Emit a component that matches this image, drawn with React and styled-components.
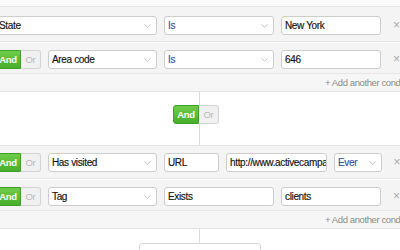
import React from 'react';
import styled, { createGlobalStyle } from 'styled-components';

const GlobalStyle = createGlobalStyle`
  html, body {
    margin: 0;
    padding: 0;
    background: #fff;
  }
  body {
    font-family: "Liberation Sans", Arial, Helvetica, sans-serif;
  }
`;

const Viewport = styled.div`
  width: 400px;
  height: 250px;
  overflow: hidden;
  background: #fff;
`;

const Canvas = styled.div`
  width: 410px;
  margin-left: -5px;
  display: flex;
  flex-direction: column;
`;

const Group = styled.div`
  background: #f4f4f4;
  border-top: ${props => props.$open ? 'none' : '1px solid #e2e2e2'};
  border-bottom: 1px solid #e2e2e2;
  display: flex;
  flex-direction: column;
`;

const TopStrip = styled.div`
  height: 6px;
  background: #fbfbfb;
  border-bottom: 1px solid #e6e6e6;
`;

const Row = styled.div`
  display: flex;
  align-items: center;
  gap: 7px;
  padding-top: ${props => props.$top || 7}px;
  padding-bottom: ${props => props.$last ? 4 : 6}px;
  border-bottom: ${props => props.$last ? 'none' : '1px solid #e4e4e4'};
  box-shadow: ${props => props.$last ? 'none' : '0 1px 0 #fff'};
  margin-bottom: ${props => props.$last ? 0 : 1}px;
`;

const Toggle = styled.div`
  display: flex;
  flex-shrink: 0;
  height: 19px;
  margin-right: ${props => props.$shift || 0}px;
`;

const AndBtn = styled.div`
  width: 26px;
  box-sizing: border-box;
  display: flex;
  align-items: center;
  justify-content: center;
  background: linear-gradient(#6fcc4a, #47ae2c);
  border: 1px solid #3f9e28;
  border-radius: 3px 0 0 3px;
  color: #fff;
  font-size: 9.5px;
  font-weight: bold;
  letter-spacing: -0.3px;
`;

const OrBtn = styled.div`
  width: 20px;
  box-sizing: border-box;
  display: flex;
  align-items: center;
  justify-content: center;
  background: #f0f0f0;
  border: 1px solid #d3d3d3;
  border-left: none;
  border-radius: 0 3px 3px 0;
  color: #b8b8b8;
  font-size: 9.5px;
  letter-spacing: -0.3px;
`;

const Field = styled.div`
  width: ${props => props.$w}px;
  flex-shrink: 0;
  height: 19px;
  box-sizing: border-box;
  display: flex;
  align-items: center;
  justify-content: space-between;
  padding: 0 5px 0 3px;
  background: #fff;
  border: 1px solid #cdcdcd;
  border-radius: 3px;
  font-size: 10px;
  letter-spacing: -0.35px;
  color: ${props => props.$blue ? '#33509f' : '#111'};
  -webkit-text-stroke: 0.15px ${props => props.$blue ? '#33509f' : '#111'};
  white-space: nowrap;
  overflow: hidden;
`;

const Chevron = () => (
  <svg width="7" height="4" viewBox="0 0 7 4">
    <path d="M0.5 0.5 L3.5 3.2 L6.5 0.5" fill="none" stroke="#c4c4c4" strokeWidth="1" />
  </svg>
);

const Close = styled.div`
  width: 18px;
  text-align: center;
  color: #aaa;
  font-size: 12px;
  line-height: 19px;
`;

const Footer = styled.div`
  height: 17px;
  display: flex;
  align-items: center;
  padding-left: 330px;
  background: #f6f6f6;
  border-top: 1px solid #e8e8e8;
  color: #8a8a8a;
  font-size: 9.5px;
  letter-spacing: -0.4px;
  white-space: nowrap;
`;

const Connector = styled.div`
  height: ${props => props.$h}px;
  display: flex;
  flex-direction: column;
  align-items: center;
  padding-top: ${props => props.$pad || 0}px;
  box-sizing: border-box;
  background: linear-gradient(to right, transparent calc(50% - 1px), #dcdcdc calc(50% - 1px), #dcdcdc 50%, transparent 50%);
`;

const AddGroup = styled.div`
  width: 122px;
  height: 30px;
  margin: 0 auto;
  box-sizing: border-box;
  background: #fff;
  border: 1px solid #d6d6d6;
  border-radius: 3px;
`;

const AndOr = ({ shift }) => (
  <Toggle $shift={shift}>
    <AndBtn>And</AndBtn>
    <OrBtn>Or</OrBtn>
  </Toggle>
);

const Select = ({ w, blue, children }) => (
  <Field $w={w} $blue={blue}>
    <span>{children}</span>
    <Chevron />
  </Field>
);

const App = () => (
  <Viewport>
    <GlobalStyle />
    <Canvas>
      <Group $open>
        <TopStrip />
        <Row $top={9}>
          <Select w={162}>State</Select>
          <Select w={110} blue>Is</Select>
          <Field $w={100}>New York</Field>
          <Close>×</Close>
        </Row>
        <Row $last>
          <AndOr />
          <Select w={109}>Area code</Select>
          <Select w={110} blue>Is</Select>
          <Field $w={100}>646</Field>
          <Close>×</Close>
        </Row>
        <Footer>+ Add another condition</Footer>
      </Group>

      <Connector $h={53} $pad={13}>
        <AndOr shift={8} />
      </Connector>

      <Group>
        <Row>
          <AndOr />
          <Select w={109}>Has visited</Select>
          <Field $w={55}>URL</Field>
          <Field $w={101}>http://www.activecampaign.com</Field>
          <Select w={48} blue>Ever</Select>
          <Close>×</Close>
        </Row>
        <Row $last>
          <AndOr />
          <Select w={109}>Tag</Select>
          <Field $w={110}>Exists</Field>
          <Field $w={100}>clients</Field>
          <Close>×</Close>
        </Row>
        <Footer>+ Add another condition</Footer>
      </Group>

      <Connector $h={14} />
      <AddGroup />
    </Canvas>
  </Viewport>
);

export default App;
